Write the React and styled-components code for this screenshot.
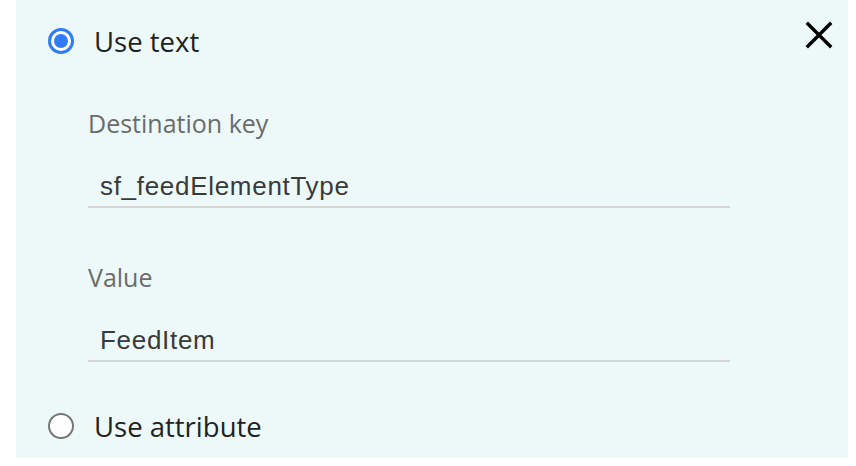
import React from "react";
import styled, { createGlobalStyle } from "styled-components";

const Global = createGlobalStyle`
  html, body { margin: 0; padding: 0; background: #ffffff; }
  body { font-family: "Open Sans", "Liberation Sans", sans-serif; }
`;

const Page = styled.div`
  width: 856px;
  height: 466px;
  padding-left: 16px;
  box-sizing: border-box;
`;

const Panel = styled.section`
  position: relative;
  width: 832px;
  height: 458px;
  background: #edf9f9;
  box-sizing: border-box;
  padding: 28px 0 0 32px;
  display: flex;
  flex-direction: column;
`;

const RadioRow = styled.label`
  display: flex;
  align-items: center;
  gap: 20px;
  height: 26px;
  font-size: 27.5px;
  color: #222222;
  margin-top: ${(p) => p.$top || 0}px;
`;

const RadioCircle = styled.span`
  flex: none;
  width: 26px;
  height: 26px;
  border-radius: 50%;
  box-sizing: border-box;
  border: ${(p) => (p.$checked ? "3px solid #2f7cf5" : "2.5px solid #767676")};
  background: #ffffff;
  display: flex;
  align-items: center;
  justify-content: center;
  &::after {
    content: "";
    display: ${(p) => (p.$checked ? "block" : "none")};
    width: 14px;
    height: 14px;
    border-radius: 50%;
    background: #2f7cf5;
  }
`;

const Fields = styled.div`
  padding-left: 40px;
  width: 642px;
  display: flex;
  flex-direction: column;
  gap: 54px;
  margin-top: 54px;
`;

const Field = styled.div`
  display: flex;
  flex-direction: column;
`;

const Label = styled.div`
  font-size: 25px;
  line-height: 30px;
  color: #6b6b6b;
`;

const InputBox = styled.div`
  margin-top: 33px;
  padding: 0 0 5px 12px;
  border-bottom: 2px solid #d6d6d6;
  font-family: "Liberation Sans", Arial, sans-serif;
  font-size: 26px;
  letter-spacing: 0.7px;
  line-height: 30px;
  color: #3a3a3a;
`;

const Close = styled.button`
  position: absolute;
  top: 21px;
  right: 15px;
  width: 28px;
  height: 28px;
  border: none;
  background: none;
  padding: 0;
  cursor: pointer;
`;

export default function App() {
  return (
    <>
      <Global />
      <Page>
        <Panel>
          <RadioRow>
            <RadioCircle $checked />
            Use text
          </RadioRow>
          <Fields>
            <Field>
              <Label>Destination key</Label>
              <InputBox>sf_feedElementType</InputBox>
            </Field>
            <Field>
              <Label>Value</Label>
              <InputBox>FeedItem</InputBox>
            </Field>
          </Fields>
          <RadioRow $top={51}>
            <RadioCircle />
            Use attribute
          </RadioRow>
          <Close aria-label="Close">
            <svg width="28" height="28" viewBox="0 0 28 28">
              <path d="M3 3 L25 25 M25 3 L3 25" stroke="#000" strokeWidth="3.4" strokeLinecap="square" />
            </svg>
          </Close>
        </Panel>
      </Page>
    </>
  );
}
